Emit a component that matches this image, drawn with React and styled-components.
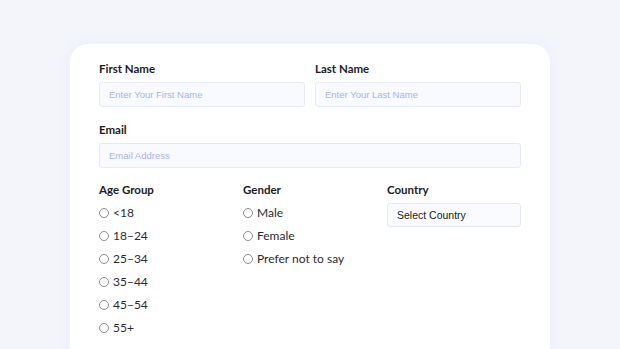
import React from 'react'
import styled, { createGlobalStyle } from 'styled-components'

const GlobalStyle = createGlobalStyle`
  html, body {
    margin: 0;
    padding: 0;
    height: 100%;
    overflow: hidden;
    background: #f3f5fb;
  }
  body {
    font-family: Lato, 'Noto Sans', sans-serif;
  }
`

const Page = styled.div`
  width: 620px;
  height: 349px;
  padding-top: 44px;
  box-sizing: border-box;
  overflow: hidden;
  display: flex;
  justify-content: center;
  align-items: flex-start;
`

const Card = styled.form`
  width: 480px;
  height: 320px;
  flex-shrink: 0;
  box-sizing: border-box;
  padding: 18px 29px 0;
  background: #ffffff;
  border-radius: 18px;
  box-shadow: 0 0 12px rgba(180, 190, 220, 0.12);
  display: flex;
  flex-direction: column;
`

const Row = styled.div`
  display: grid;
  grid-template-columns: repeat(${p => p.cols}, 1fr);
  column-gap: 10px;
  margin-bottom: ${p => p.gap || 0}px;
`

const Field = styled.div`
  display: flex;
  flex-direction: column;
`

const Label = styled.label`
  font-size: 11.5px;
  line-height: 14px;
  font-weight: 700;
  color: #1c1c22;
  margin-bottom: ${p => p.space || 6}px;
`

const TextInput = styled.input`
  height: 25px;
  box-sizing: border-box;
  border: 1px solid #e6eaf4;
  border-radius: 3px;
  background: #f8faff;
  padding: 0 9px;
  font-family: 'Liberation Sans', Arial, sans-serif;
  font-size: 9.5px;
  outline: none;
  &::placeholder {
    color: #a7b5ec;
  }
`

const Select = styled.div`
  height: 24px;
  box-sizing: border-box;
  border: 1px solid #e3e7ef;
  border-radius: 3px;
  background: #f9fbfe;
  padding: 0 9px;
  display: flex;
  align-items: center;
  font-family: 'Liberation Sans', Arial, sans-serif;
  font-size: 10.5px;
  color: #1a1a1a;
`

const Option = styled.label`
  height: 23px;
  display: flex;
  align-items: center;
  gap: 4px;
  font-size: 12px;
  color: #2a2a30;
`

const Circle = styled.span`
  width: 8px;
  height: 8px;
  border-radius: 50%;
  border: 1px solid #8a8d96;
  background: #fff;
  flex-shrink: 0;
`

const ageGroups = ['<18', '18\u201324', '25\u201334', '35\u201344', '45\u201354', '55+']
const genders = ['Male', 'Female', 'Prefer not to say']

function RadioGroup({ title, items }) {
  return (
    <Field>
      <Label space={4}>{title}</Label>
      {items.map(item => (
        <Option key={item}>
          <Circle />
          {item}
        </Option>
      ))}
    </Field>
  )
}

export default function App() {
  return (
    <Page>
      <GlobalStyle />
      <Card>
        <Row cols={2} gap={16}>
          <Field>
            <Label>First Name</Label>
            <TextInput placeholder="Enter Your First Name" />
          </Field>
          <Field>
            <Label>Last Name</Label>
            <TextInput placeholder="Enter Your Last Name" />
          </Field>
        </Row>

        <Row cols={1} gap={15}>
          <Field>
            <Label>Email</Label>
            <TextInput placeholder="Email Address" />
          </Field>
        </Row>

        <Row cols={3}>
          <RadioGroup title="Age Group" items={ageGroups} />
          <RadioGroup title="Gender" items={genders} />
          <Field>
            <Label>Country</Label>
            <Select>Select Country</Select>
          </Field>
        </Row>
      </Card>
    </Page>
  )
}
